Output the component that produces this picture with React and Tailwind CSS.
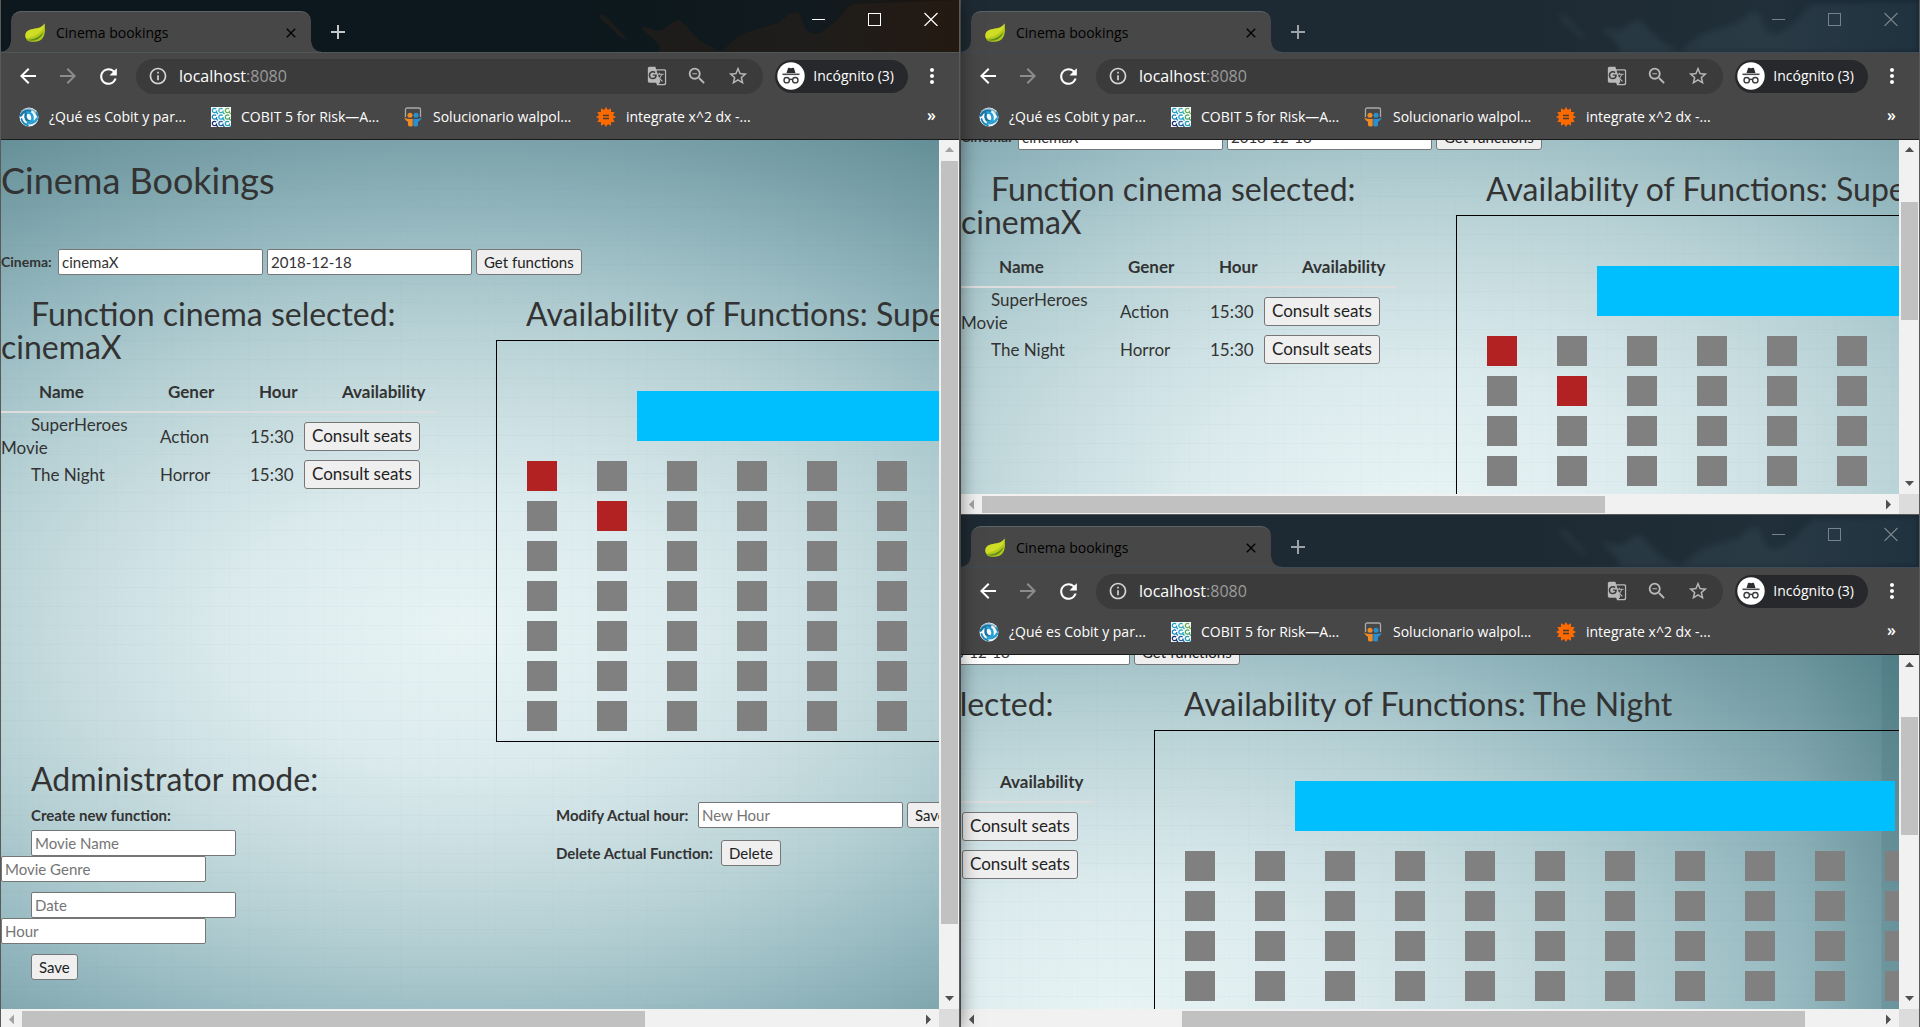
import React, { useId, useLayoutEffect, useRef, useState } from "react";
import {
  MdAdd,
  MdArrowBack,
  MdArrowForward,
  MdClose,
  MdGTranslate,
  MdInfoOutline,
  MdMoreVert,
  MdRefresh,
  MdStarBorder,
  MdZoomOut,
} from "react-icons/md";

function LeafIcon() {
  return (
    <svg viewBox="0 0 20 20" className="h-5 w-5 shrink-0" aria-hidden="true">
      <path d="M19.500.5c1 6.500 1.500 17.500-9.500 18.300-3 .2-6-.2-8-1.500C-.5 13 0 8.500 5 6.800 10.500 5 16.500 6 19.500.5Z" fill="#b3c91b" />
      <path d="M19.500.5C19.500 7 14 12 3 15c-1 .3-1.800.2-2.300-.2C-.3 11 .8 8.300 5 6.800 10.500 5 16.500 6 19.500.5Z" fill="#cfdd26" />
      <path d="M1 16.500c6.500.8 13.500-2.200 17.600-7.700-2 6.500-7 9.200-12.600 8.900-2-.1-4-.5-5-1.200Z" fill="#5f8f1c" />
    </svg>
  );
}

function SwirlIcon() {
  return (
    <svg viewBox="0 0 20 20" className="h-5 w-5 shrink-0" aria-hidden="true">
      <circle cx="10" cy="10" r="9.500" fill="#f2fafd" />
      <g fill="none" strokeLinecap="round">
        <path d="M3 5C7 .5 15 1 17.500 7.500" stroke="#8fb7cc" strokeWidth="1.600" />
        <path d="M1.800 8.500C4 4 9 3 12 4.500 8 4 6 7 6.500 10c.5 3 3 4.500 5 4.500" stroke="#1b78a8" strokeWidth="2.600" />
        <path d="M18.200 11.500C16 16 11 17 8 15.500c4 .5 6-2.500 5.500-5.500-.5-3-3-4.500-5-4.500" stroke="#2ba0d4" strokeWidth="2.600" />
        <path d="M2.500 12c1 3.500 3.500 5.500 6.500 6.300M17.500 6c.6 1 .9 2 1 3" stroke="#1c86b8" strokeWidth="1.800" />
      </g>
    </svg>
  );
}

const knots = [
  ["#1aa0c8", "#38a8b0", "#6ab04a"],
  ["#1c7fb8", "#1aa0c8", "#48a860"],
  ["#1b2f6b", "#1c5f9c", "#2a9cba"],
];

function KnotIcon() {
  return (
    <svg viewBox="0 0 20 20" className="h-5 w-5 shrink-0" aria-hidden="true">
      <rect width="20" height="20" fill="#f7fbfc" />
      {knots.map((row, r) =>
        row.map((color, c) => (
          <g key={`${r}-${c}`} fill="none" stroke={color} strokeWidth="1.200">
            <circle cx={3.5 + c * 6.5} cy={3.5 + r * 6.5} r="2.200" strokeDasharray="11 3" />
            <path d={`M${5 + c * 6.5} ${5 + r * 6.5}l2 2`} />
          </g>
        ))
      )}
    </svg>
  );
}

function SlidesIcon() {
  return (
    <svg viewBox="0 0 20 20" className="h-5 w-5 shrink-0" aria-hidden="true">
      <path d="M2.500 10V2.500c0-1 .6-1.500 1.500-1.500h12c.9 0 1.500.5 1.500 1.500V10" fill="none" stroke="#a9a9a9" strokeWidth="1.300" />
      <circle cx="7" cy="8.300" r="2.500" fill="#f08a24" />
      <circle cx="13" cy="8.300" r="2.500" fill="#2a8fd0" />
      <path d="M1 10c1.500 2 4 2.200 8.700 1.800V19c-1 .8-4.400.8-4.700-1-.2-1.300 0-2.500 0-3.300C3 13.800 1.500 12.300 1 10Z" fill="#f08a24" />
      <path d="M19 10c-1.500 2-4 2.200-8.700 1.800V19c1 .8 4.400.8 4.700-1 .2-1.300 0-2.500 0-3.300 2-.9 3.500-2.400 4-4.700Z" fill="#2a8fd0" />
    </svg>
  );
}

function StarburstIcon() {
  const points = Array.from({ length: 24 }, (_, i) => {
    const radius = i % 2 ? 7.2 : 10;
    const angle = (i * Math.PI) / 12 - Math.PI / 2;
    return `${10 + radius * Math.cos(angle)},${10 + radius * Math.sin(angle)}`;
  }).join(" ");
  return (
    <svg viewBox="0 0 20 20" className="h-5 w-5 shrink-0" aria-hidden="true">
      <polygon points={points} fill="#ff6a00" />
      <path d="M7 8.500h6M7 11.500h6" stroke="#4a3c30" strokeWidth="1.300" />
    </svg>
  );
}

function IncognitoIcon() {
  return (
    <svg viewBox="0 0 28 28" className="h-7 w-7 shrink-0" aria-hidden="true">
      <circle cx="14" cy="14" r="13.700" fill="#fff" />
      <path d="M9.500 11 11 6.300c.2-.6.7-.8 1.200-.6l1.800.6 1.800-.6c.5-.2 1 0 1.200.6L18.500 11Z" fill="#2b2c30" />
      <path d="M5.500 12.300h17" stroke="#4a4b4f" strokeWidth="1.600" />
      <g fill="none" stroke="#3a3b3f" strokeWidth="1.400">
        <circle cx="9.700" cy="18.200" r="2.700" />
        <circle cx="18.300" cy="18.200" r="2.700" />
        <path d="M12.400 17.800c1-.7 2.200-.7 3.200 0" />
      </g>
    </svg>
  );
}

const bookmarks = [
  { icon: SwirlIcon, label: "¿Qué es Cobit y par...", width: "w-[192px]" },
  { icon: KnotIcon, label: "COBIT 5 for Risk—A...", width: "w-[192px]" },
  { icon: SlidesIcon, label: "Solucionario walpol...", width: "w-[193px]" },
  { icon: StarburstIcon, label: "integrate x^2 dx -...", width: "w-[192px]" },
];

function CloudTexture({ active }) {
  return (
    <svg
      viewBox="0 0 360 52"
      preserveAspectRatio="none"
      className={active ? "absolute inset-y-0 right-0 h-full w-[360px] opacity-50" : "absolute inset-y-0 right-0 h-full w-[360px] opacity-35 blur-[3px]"}
      aria-hidden="true"
    >
      <g fill={active ? "#2c2018" : "#3b4f5c"}>
        <path d="M0 14c6 0 10 5 14 10s10 8 14 16c-8-2-12-8-16-12S2 22 0 14Z" />
        <path d="M42 28c8-2 14 4 20 2s8-8 18-10c6 4 12 12 18 18s14 8 24 14H60c4-8-8-14-18-24Z" />
        <path d="M120 52c10-4 14-14 24-18s20-6 32-10c8-2 12-12 20-12s6 14 14 20 18-4 26-10 10-14 18-18l106-4v52Z" />
      </g>
    </svg>
  );
}

function TitleBar({ active }) {
  return (
    <header
      className={
        active
          ? "relative flex h-[53px] items-end overflow-hidden border-b border-[#4f5759] bg-linear-to-r from-[#0c181d] from-60% via-[#111a1f] via-85% to-[#1c130a]"
          : "relative flex h-[53px] items-end overflow-hidden border-b border-[#3f4c56] bg-linear-to-r from-[#1e2a33] from-60% via-[#202f39] via-85% to-[#132330]"
      }
    >
      <CloudTexture active={active} />
      <div className="relative flex h-[41px] items-stretch">
        <div className="flex w-[10px] items-end">
          <div className="h-[10px] w-[10px] bg-[radial-gradient(circle_at_0_0,transparent_9px,#474747_10px)]" />
        </div>
        <div className="flex w-[300px] items-center rounded-t-[10px] border-t border-[#5c6366] bg-[#474747] pt-px pl-[14px] pr-3 text-black">
          <LeafIcon />
          <span className="ml-[11px] flex-1 text-sm">Cinema bookings</span>
          <button type="button" aria-label="Close tab" className="flex">
            <MdClose size={16} />
          </button>
        </div>
        <div className="flex w-[10px] items-end">
          <div className="h-[10px] w-[10px] bg-[radial-gradient(circle_at_100%_0,transparent_9px,#474747_10px)]" />
        </div>
        <button type="button" aria-label="New tab" className={active ? "ml-[5px] text-[#c3c6c7]" : "ml-[5px] text-[#9ba1a5]"}>
          <MdAdd size={24} />
        </button>
      </div>
      <div className={active ? "relative ml-auto flex self-start pt-3 pr-[21px] text-white" : "relative ml-auto flex self-start pt-3 pr-[21px] text-[#76828b]"}>
        <div className="flex gap-[42px]">
          <button type="button" aria-label="Minimize">
            <svg viewBox="0 0 14 14" className="h-[14px] w-[14px]"><path d="M0 7.500h13" stroke="currentColor" /></svg>
          </button>
          <button type="button" aria-label="Maximize">
            <svg viewBox="0 0 14 14" className="h-[14px] w-[14px]"><rect x="0.500" y="1.500" width="12" height="12" fill="none" stroke="currentColor" /></svg>
          </button>
          <button type="button" aria-label="Close window">
            <svg viewBox="0 0 14 14" className="h-[14px] w-[14px]"><path d="m.5 1 13 13m0-13-13 13" stroke="currentColor" strokeWidth="1.200" /></svg>
          </button>
        </div>
      </div>
    </header>
  );
}

function Toolbar() {
  const id = useId();
  return (
    <div className="flex h-[46px] items-center bg-[#474747] pl-[15px] pr-[15px]">
      <div className="flex items-center gap-4 text-white">
        <button type="button" aria-label="Back"><MdArrowBack size={24} /></button>
        <button type="button" aria-label="Forward" className="text-[#8c8c8c]"><MdArrowForward size={24} /></button>
        <button type="button" aria-label="Reload"><MdRefresh size={25} /></button>
      </div>
      <div className="ml-[15px] flex h-[35px] flex-1 items-center rounded-full bg-[#3b3b3b] pl-3 pr-[14px] text-[#b9b9b9]">
        <MdInfoOutline size={20} className="text-[#d5d5d5]" />
        <label htmlFor={id} className="sr-only">Address</label>
        <div className="relative ml-[11px] flex-1 text-base">
          <span aria-hidden="true"><span className="text-white">localhost</span><span className="text-[#9c9c9c]">:8080</span></span>
          <input id={id} type="text" className="absolute inset-0 w-full bg-transparent outline-none" />
        </div>
        <div className="flex items-center gap-[19px]">
          <button type="button" aria-label="Translate"><MdGTranslate size={20} /></button>
          <button type="button" aria-label="Zoom"><MdZoomOut size={22} /></button>
          <button type="button" aria-label="Bookmark"><MdStarBorder size={22} /></button>
        </div>
      </div>
      <button type="button" className="ml-3 flex h-[33px] items-center gap-2 rounded-full bg-[#27282b] pl-[2px] pr-[14px] text-sm text-white">
        <IncognitoIcon />
        Incógnito (3)
      </button>
      <button type="button" aria-label="Menu" className="ml-3 text-white"><MdMoreVert size={24} /></button>
    </div>
  );
}

function BookmarkBar() {
  return (
    <nav className="flex h-[41px] items-center border-b border-[#1b1b1b] bg-[#474747] pb-[5px] pl-[18px] pr-[23px] text-sm text-white" aria-label="Bookmarks">
      {bookmarks.map(({ icon: Icon, label, width }) => (
        <a key={label} href="#bookmark" className={`flex shrink-0 items-center gap-[10px] whitespace-nowrap ${width}`}>
          <Icon />
          {label}
        </a>
      ))}
      <button type="button" aria-label="More bookmarks" className="ml-auto pb-1 text-base font-semibold leading-5">»</button>
    </nav>
  );
}

function Arrow({ direction, dim }) {
  const paths = {
    up: "M1 7 5.500 2 10 7Z",
    down: "M1 3 5.500 8 10 3Z",
    left: "M8 0.500 3 5.500 8 10.500Z",
    right: "M3 0.500 8 5.500 3 10.500Z",
  };
  return (
    <svg viewBox="0 0 11 11" className="h-[11px] w-[11px]" aria-hidden="true">
      <path d={paths[direction]} fill={dim ? "#a3a3a3" : "#505050"} />
    </svg>
  );
}

function ScrollBar({ vertical, start, size }) {
  const percent = (value) => `${value * 100}%`;
  return vertical ? (
    <div className="flex w-5 flex-col bg-[#f1f1f1]">
      <div className="flex h-[21px] items-center justify-center"><Arrow direction="up" dim={start === 0} /></div>
      <div className="min-h-0 flex-1 pl-[2px] pr-px">
        <div style={{ height: percent(start) }} />
        <div className="bg-[#c1c1c1]" style={{ height: percent(size) }} />
      </div>
      <div className="flex h-[21px] items-center justify-center"><Arrow direction="down" /></div>
    </div>
  ) : (
    <div className="flex h-5 flex-1 bg-[#f1f1f1]">
      <div className="flex w-[21px] items-center justify-center"><Arrow direction="left" dim={start === 0} /></div>
      <div className="flex min-w-0 flex-1 pt-[2px] pb-px">
        <div style={{ width: percent(start) }} />
        <div className="bg-[#c1c1c1]" style={{ width: percent(size) }} />
      </div>
      <div className="flex w-[21px] items-center justify-center"><Arrow direction="right" /></div>
    </div>
  );
}

function TextField({ label, ...props }) {
  return (
    <input
      type="text"
      aria-label={label}
      className="h-[26px] w-[205px] rounded-[2px] border border-[#767676] bg-white px-[3px] pb-px text-[15px] text-[#333] outline-none placeholder:text-[#757575]"
      {...props}
    />
  );
}

function PageButton({ children }) {
  return (
    <button type="button" className="h-[26px] rounded-[3px] border border-[#767676] bg-[#efefef] px-[7px] pb-px text-[15px] leading-5 whitespace-nowrap text-[#222]">
      {children}
    </button>
  );
}

const functions = [
  { name: "SuperHeroes Movie", genre: "Action", hour: "15:30" },
  { name: "The Night", genre: "Horror", hour: "15:30" },
];

function FunctionsTable() {
  return (
    <table className="mt-[9px] w-[435px] table-fixed border-collapse text-left text-[17px]">
      <colgroup>
        <col className="w-[129px]" />
        <col className="w-[91px]" />
        <col className="w-[83px]" />
        <col />
      </colgroup>
      <thead>
        <tr className="h-10 border-b-2 border-[#ddd]">
          {["Name", "Gener", "Hour", "Availability"].map((heading) => (
            <th key={heading} scope="col" className="pl-[38px] leading-[22px] font-bold">{heading}</th>
          ))}
        </tr>
      </thead>
      <tbody>
        {functions.map((item) => (
          <tr key={item.name} className="h-[30px] leading-[23px]">
            <td className="indent-[30px]">{item.name}</td>
            <td className="pl-[30px]">{item.genre}</td>
            <td className="pl-[29px]">{item.hour}</td>
            <td>
              <button type="button" className="block h-[29px] rounded-[3px] border border-[#767676] bg-[#efefef] px-[7px] pb-px leading-[23px] whitespace-nowrap text-[#222]">
                Consult seats
              </button>
            </td>
          </tr>
        ))}
      </tbody>
    </table>
  );
}

function SeatMap({ reserved }) {
  return (
    <div className="mt-[10px] h-[402px] w-[855px] border border-black pt-[50px] pl-[30px]">
      <div className="ml-[110px] h-[50px] w-[600px] bg-[#00bfff]" />
      <div className="mt-5 grid grid-cols-[repeat(12,30px)] gap-x-10 gap-y-[10px]">
        {Array.from({ length: 84 }, (_, seat) => (
          <div key={seat} className={reserved.includes(seat) ? "h-[30px] bg-[#b22222]" : "h-[30px] bg-[#808080]"} />
        ))}
      </div>
    </div>
  );
}

function CinemaPage({ movie, reserved }) {
  const id = useId();
  return (
    <div className="h-[942px] w-[1350px] bg-[linear-gradient(90deg,transparent_1140px,rgba(40,90,100,0.12)_1222px,rgba(40,90,100,0.26)_1223px),repeating-linear-gradient(0deg,rgba(60,110,120,0.03)_0_1px,transparent_1px_19px),repeating-linear-gradient(90deg,rgba(60,110,120,0.015)_0_1px,transparent_1px_19px),radial-gradient(ellipse_870px_520px_at_460px_490px,#e8f4f4_0%,#dcebee_25%,#cbdfe2_42%,#b4cfd3_60%,#97bac1_77%,#7aa1a9_95%,#5b8790_115%)] pt-5 font-[Lato,sans-serif] text-[#333]">
      <h1 className="text-4xl leading-10">Cinema Bookings</h1>
      <form className="mt-[49px] flex items-center gap-1" onSubmit={(event) => event.preventDefault()}>
        <label htmlFor={`${id}-cinema`} className="w-[53px] text-sm font-bold">Cinema:</label>
        <TextField id={`${id}-cinema`} defaultValue="cinemaX" />
        <TextField label="Date" defaultValue="2018-12-18" />
        <PageButton>Get functions</PageButton>
      </form>

      <div className="mt-[22px] flex gap-[60px]">
        <section className="w-[435px] shrink-0">
          <h2 className="indent-[30px] text-[32px] leading-[33px]">Function cinema selected: cinemaX</h2>
          <FunctionsTable />
        </section>
        <section>
          <h2 className="pl-[30px] text-[32px] leading-[33px] whitespace-nowrap">Availability of Functions: {movie}</h2>
          <SeatMap reserved={reserved} />
        </section>
      </div>

      <h2 className="mt-5 pl-[30px] text-[32px] leading-[33px]">Administrator mode:</h2>
      <div className="flex">
        <form className="flex w-[555px] flex-col gap-[10px] pt-[10px]" onSubmit={(event) => event.preventDefault()}>
          <div className="flex flex-col items-start">
            <p className="mb-[5px] pl-[30px] text-[15px] leading-5 font-bold">Create new function:</p>
            <div className="pl-[30px]"><TextField label="Movie Name" placeholder="Movie Name" /></div>
            <TextField label="Movie Genre" placeholder="Movie Genre" />
          </div>
          <div className="flex flex-col items-start">
            <div className="pl-[30px]"><TextField label="Date" placeholder="Date" /></div>
            <TextField label="Hour" placeholder="Hour" />
          </div>
          <div className="pl-[30px]"><PageButton>Save</PageButton></div>
        </form>
        <form className="flex flex-col gap-3 pt-[7px]" onSubmit={(event) => event.preventDefault()}>
          <div className="flex items-center gap-1">
            <label htmlFor={`${id}-hour`} className="w-[138px] text-[15px] font-bold whitespace-nowrap">Modify Actual hour:</label>
            <TextField id={`${id}-hour`} placeholder="New Hour" />
            <PageButton>Save</PageButton>
          </div>
          <div className="flex items-center gap-1">
            <span className="w-[161px] text-[15px] font-bold whitespace-nowrap">Delete Actual Function:</span>
            <PageButton>Delete</PageButton>
          </div>
        </form>
      </div>
    </div>
  );
}

function BrowserWindow({ active = false, className = "", left = 0, top = 0, movie, reserved = [] }) {
  const viewport = useRef(null);
  const [bars, setBars] = useState({ x: [0, 1], y: [0, 1] });

  useLayoutEffect(() => {
    const update = () => {
      const el = viewport.current;
      el.scrollTo(left, top);
      setBars({
        x: [el.scrollLeft / el.scrollWidth, el.clientWidth / el.scrollWidth],
        y: [el.scrollTop / el.scrollHeight, el.clientHeight / el.scrollHeight],
      });
    };
    update();
    window.addEventListener("resize", update);
    return () => window.removeEventListener("resize", update);
  }, [left, top]);

  return (
    <section className={`flex min-h-0 min-w-0 flex-col border-x border-b border-[#5a5a5a] font-['Open_Sans',sans-serif] ${className}`}>
      <TitleBar active={active} />
      <Toolbar />
      <BookmarkBar />
      <div className="flex min-h-0 flex-1">
        <main ref={viewport} className="min-w-0 flex-1 overflow-hidden">
          <CinemaPage movie={movie} reserved={reserved} />
        </main>
        <ScrollBar vertical start={bars.y[0]} size={bars.y[1]} />
      </div>
      <div className="flex">
        <ScrollBar start={bars.x[0]} size={bars.x[1]} />
        <div className="w-5 bg-[#dcdcdc]" />
      </div>
    </section>
  );
}

export default function App() {
  return (
    <div className="h-screen overflow-hidden bg-[#1e2a33]">
      <div className="grid h-[calc(100vh+3px)] grid-cols-2 grid-rows-2">
        <BrowserWindow
          active
          className="relative z-10 row-span-2 shadow-[0_0_18px_rgba(0,0,0,0.5)]"
          movie="SuperHeroes Movie"
          reserved={[0, 13]}
        />
        <BrowserWindow top={125} movie="SuperHeroes Movie" reserved={[0, 13]} />
        <BrowserWindow left={302} top={125} movie="The Night" />
      </div>
    </div>
  );
}
